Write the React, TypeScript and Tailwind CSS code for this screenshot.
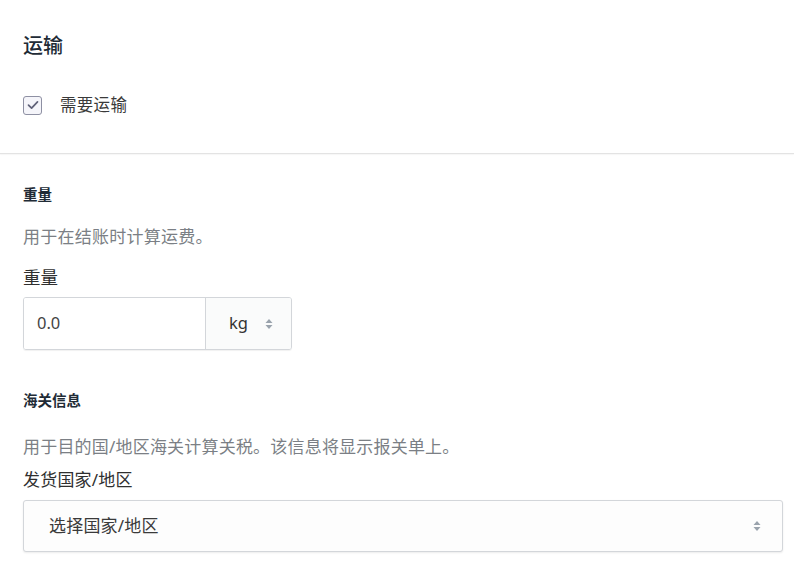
import React from "react";

const font = { fontFamily: '"Noto Sans", "Noto Sans CJK SC", sans-serif' };

function Arrows() {
  return (
    <svg width="8" height="12" viewBox="0 0 8 12" aria-hidden="true">
      <path d="M4 1 L7.5 5 L0.5 5 Z" fill="#9aa3ad" />
      <path d="M4 11 L7.5 7 L0.5 7 Z" fill="#9aa3ad" />
    </svg>
  );
}

export default function App() {
  return (
    <div className="w-[794px] h-[561px] bg-white overflow-hidden text-[#212b36]" style={font}>
      <div className="pl-[23px] pr-[11px] pt-[32px] pb-[38px]">
        <h2 className="text-[20px] leading-[28px] font-medium text-[#212b36]">运输</h2>
        <label className="mt-[35px] flex items-center h-[20px]">
          <span className="w-[19px] h-[19px] rounded-[3px] border border-[#8e90a3] bg-[#f5f5fa] flex items-center justify-center">
            <svg width="12" height="10" viewBox="0 0 12 10" aria-hidden="true">
              <path d="M1.5 5.2 L4.6 8.2 L10.5 1.8" fill="none" stroke="#5f6178" strokeWidth="1.7" strokeLinecap="round" strokeLinejoin="round" />
            </svg>
          </span>
          <span className="ml-[18px] text-[16.5px] leading-[20px] tracking-[0.3px] text-[#3a3a3a]">需要运输</span>
        </label>
      </div>
      <div className="h-px bg-[#e3e3e3] shadow-[0_1px_1px_rgba(0,0,0,0.04)]" />
      <div className="pl-[23px] pr-[11px] pt-[30px]">
        <h3 className="text-[14.5px] leading-[20px] font-bold text-[#212b36]">重量</h3>
        <p className="mt-[21px] text-[17px] leading-[24px] tracking-[0.25px] text-[#7b7f85]">用于在结账时计算运费。</p>
        <div className="mt-[16px] text-[17.5px] leading-[24px] text-[#2f2f2f]">重量</div>
        <div className="mt-[8px] flex w-[269px] h-[53px] rounded-[3px] border border-[#d3d6da] shadow-[0_1px_1px_rgba(0,0,0,0.06)] overflow-hidden">
          <div className="w-[182px] flex items-center pl-[13px] text-[16.5px] text-[#444] bg-white border-r border-[#d3d6da]">0.0</div>
          <div className="flex-1 flex items-center bg-[#fafbfb] pl-[23px] text-[16.5px] text-[#333]">
            <span>kg</span>
            <span className="ml-[17px] flex items-center"><Arrows /></span>
          </div>
        </div>
        <h3 className="mt-[40px] text-[14.5px] leading-[20px] font-bold text-[#212b36]">海关信息</h3>
        <p className="mt-[25px] text-[17px] leading-[24px] tracking-[0.2px] text-[#7b7f85]">用于目的国/地区海关计算关税。该信息将显示报关单上。</p>
        <div className="mt-[9px] text-[17px] leading-[24px] tracking-[0.2px] text-[#2f2f2f]">发货国家/地区</div>
        <div className="mt-[8px] w-[760px] h-[52px] rounded-[3px] border border-[#d3d6da] bg-[#fdfdfd] shadow-[0_1px_2px_rgba(0,0,0,0.08)] flex items-center pl-[25px] pr-[21px]">
          <span className="flex-1 text-[17px] tracking-[0.2px] text-[#3a3a3a]">选择国家/地区</span>
          <Arrows />
        </div>
      </div>
    </div>
  );
}
